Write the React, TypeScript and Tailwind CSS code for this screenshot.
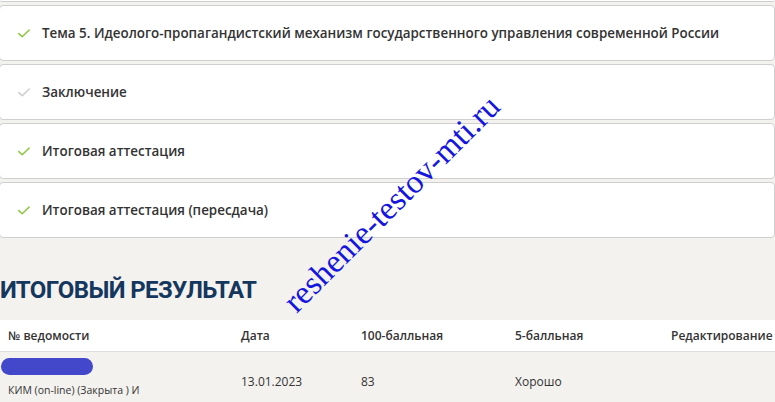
import React from 'react';

type Step = { title: string; done: boolean };

const steps: Step[] = [
  { title: 'Тема 5. Идеолого-пропагандистский механизм государственного управления современной России', done: true },
  { title: 'Заключение', done: false },
  { title: 'Итоговая аттестация', done: true },
  { title: 'Итоговая аттестация (пересдача)', done: true },
];

const Check = ({ done }: { done: boolean }) => (
  <svg viewBox="0 0 12 9" className="h-[9px] w-[12px] shrink-0" fill="none">
    <path
      d="M0.8 4.6 L4.2 7.8 L11.2 1"
      stroke={done ? '#8cc63e' : '#cccccc'}
      strokeWidth={1.5}
      strokeLinecap="round"
      strokeLinejoin="round"
    />
  </svg>
);

const StepCard = ({ step }: { step: Step }) => (
  <div className="flex h-[56px] items-center gap-[12px] rounded-[4px] border border-[#cfcfcf] bg-white pl-[18px] -ml-px">
    <Check done={step.done} />
    <span className="text-[13.4px] font-semibold text-[#333333]">{step.title}</span>
  </div>
);

export default function App() {
  const cols = ['№ ведомости', 'Дата', '100-балльная', '5-балльная', 'Редактирование'];

  return (
    <div
      className="relative h-[402px] w-full overflow-hidden bg-[#f3f2ef]"
      style={{ fontFamily: '"Open Sans", "Noto Sans", sans-serif' }}
    >
      <div className="flex flex-col gap-[3px]">
        <div className="h-[2px] rounded-b-[4px] border-b border-[#cfcfcf] bg-white" />
        {steps.map((s) => (
          <StepCard key={s.title} step={s} />
        ))}
      </div>

      <h2
        className="mt-[35px] text-[24px] font-bold leading-[34px] tracking-[-0.6px] text-[#15375e]"
        style={{ fontFamily: 'Roboto, "Open Sans", sans-serif' }}
      >
        ИТОГОВЫЙ РЕЗУЛЬТАТ
      </h2>

      <div className="mt-[13px]">
        <div className="grid h-[32px] grid-cols-[241px_120px_154px_156px_1fr] items-center border-b border-[#dedede] bg-white text-[12px] font-semibold text-[#333333]">
          {cols.map((c, i) => (
            <div key={c} className={i === 0 ? 'pl-[8px]' : ''}>
              {c}
            </div>
          ))}
        </div>
        <div className="grid grid-cols-[241px_120px_154px_156px_1fr] items-start text-[12px] leading-[16px] text-[#333333]">
          <div className="flex flex-col pt-[6px]">
            <div className="ml-[1px] h-[17px] w-[92px] rounded-[9px] bg-[#4347c9]" />
            <div className="mt-[8px] pl-[8px] text-[10.5px] leading-[14px]">КИМ (on-line) (Закрыта ) И</div>
          </div>
          <div className="pt-[22px]">13.01.2023</div>
          <div className="pt-[22px]">83</div>
          <div className="pt-[22px]">Хорошо</div>
          <div />
        </div>
      </div>

      <div
        className="pointer-events-none absolute left-[392px] top-[204px] -translate-x-1/2 -translate-y-1/2 -rotate-45 whitespace-nowrap text-[33px] text-[#1515e0]"
        style={{ fontFamily: '"Liberation Serif", "Times New Roman", serif' }}
      >
        reshenie-testov-mti.ru
      </div>
    </div>
  );
}
